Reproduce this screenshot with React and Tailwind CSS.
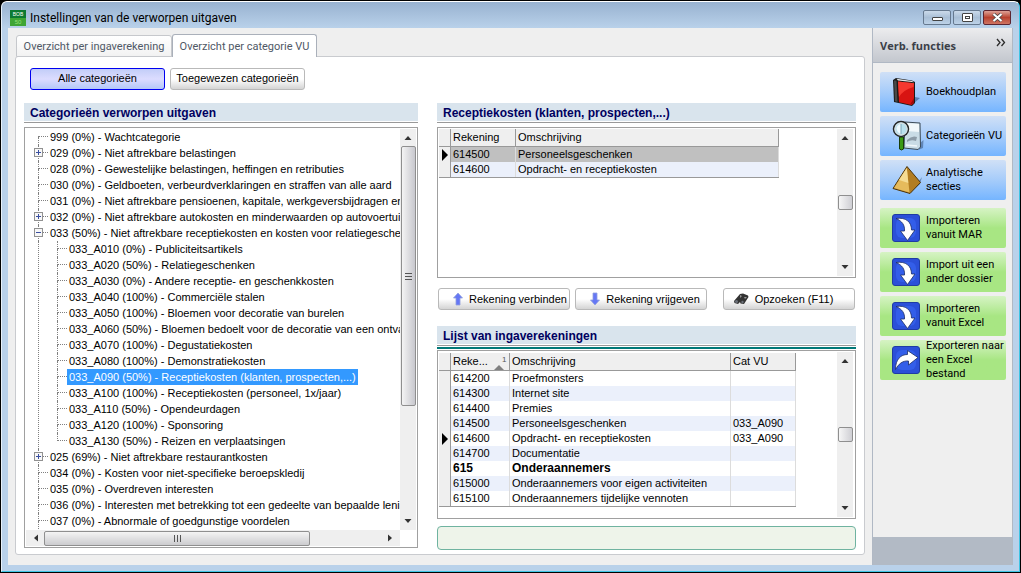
import React from 'react';

const TREE = [
  { label: '999 (0%) - Wachtcategorie' },
  { label: '029 (0%) - Niet aftrekbare belastingen', expander: 'plus' },
  { label: '028 (0%) - Gewestelijke belastingen, heffingen en retributies' },
  { label: '030 (0%) - Geldboeten, verbeurdverklaringen en straffen van alle aard' },
  { label: '031 (0%) - Niet aftrekbare pensioenen, kapitale, werkgeversbijdragen en -p' },
  { label: '032 (0%) - Niet aftrekbare autokosten en minderwaarden op autovoertuige', expander: 'plus' },
  {
    label: '033 (50%) - Niet aftrekbare receptiekosten en kosten voor relatiegeschenk',
    expander: 'minus',
    children: [
      '033_A010 (0%) - Publiciteitsartikels',
      '033_A020 (50%) - Relatiegeschenken',
      '033_A030 (0%) - Andere receptie- en geschenkkosten',
      '033_A040 (100%) - Commerciële stalen',
      '033_A050 (100%) - Bloemen voor decoratie van burelen',
      '033_A060 (50%) - Bloemen bedoelt voor de decoratie van een ontvan',
      '033_A070 (100%) - Degustatiekosten',
      '033_A080 (100%) - Demonstratiekosten',
      '033_A090 (50%) - Receptiekosten (klanten, prospecten,...)',
      '033_A100 (100%) - Receptiekosten (personeel, 1x/jaar)',
      '033_A110 (50%) - Opendeurdagen',
      '033_A120 (100%) - Sponsoring',
      '033_A130 (50%) - Reizen en verplaatsingen',
    ],
  },
  { label: '025 (69%) - Niet aftrekbare restaurantkosten', expander: 'plus' },
  { label: '034 (0%) - Kosten voor niet-specifieke beroepskledij' },
  { label: '035 (0%) - Overdreven interesten' },
  { label: '036 (0%) - Interesten met betrekking tot een gedeelte van bepaalde lening' },
  { label: '037 (0%) - Abnormale of goedgunstige voordelen' },
];

const SELECTED = '033_A090';

const LINKED = [
  { code: '614500', name: 'Personeelsgeschenken', current: true },
  { code: '614600', name: 'Opdracht- en receptiekosten' },
];

const ACCOUNTS = [
  { code: '614200', name: 'Proefmonsters' },
  { code: '614300', name: 'Internet site' },
  { code: '614400', name: 'Premies' },
  { code: '614500', name: 'Personeelsgeschenken', cat: '033_A090' },
  { code: '614600', name: 'Opdracht- en receptiekosten', cat: '033_A090', current: true },
  { code: '614700', name: 'Documentatie' },
  { code: '615', name: 'Onderaannemers', bold: true },
  { code: '615000', name: 'Onderaannemers voor eigen activiteiten' },
  { code: '615100', name: 'Onderaannemers tijdelijke vennoten' },
];

/* ---------- icons ---------- */

const BookIcon = () => (
  <svg viewBox="0 0 28 30" className="h-[30px] w-7">
    <path d="M21 27 L28 21 L23 20 Z" fill="#2d4a74" opacity=".55" />
    <path d="M1 3 L4 1 L20 3.500 L23 5 L23 26 L20 29 L2 25 Z" fill="#1b1b1b" />
    <path d="M4.500 1.800 L20 4 L22 5.200 L6 3.400 Z" fill="#e6e6e6" />
    <path d="M2 3.500 L4.500 3.800 L5.500 25 L3 24.300 Z" fill="#4a4a4a" />
    <path d="M6 4.500 L22 6.200 L22 26 L19.500 28 L7 25.300 Z" fill="#d81412" />
    <path d="M6 4.500 L22 6.200 L21.500 10 Q11 13 7 20 Z" fill="#f5392f" />
    <path d="M18 27.700 L22 26 L22 21 Z" fill="#9d0a0a" />
  </svg>
);

const SearchDocIcon = () => (
  <svg viewBox="0 0 32 32" className="h-8 w-8">
    <path d="M27 24 L31.500 20 L31 28 L26 30 Z" fill="#2d4a74" opacity=".5" />
    <path d="M13 2 L28 3 L28.500 27 L26 29.500 L12 28 Z" fill="#c9dce6" stroke="#3c4c5a" />
    <path d="M14 3 L27 4 L27 12 L14 11 Z" fill="#f1f8fb" />
    <path d="M15 20 Q20 15 25 17 L24 21 Q19 19 15 22 Z" fill="#8d9ca8" />
    <path d="M14 25 L25 26" stroke="#f1f8fb" strokeWidth="1.500" />
    <path d="M7.500 17 h4 v12 q-2 2 -4 0 Z" fill="#3a9a14" stroke="#173d08" />
    <circle cx="9" cy="9" r="7.500" fill="#b9e1ee" stroke="#262626" strokeWidth="1.500" />
    <circle cx="9" cy="9" r="6" fill="none" stroke="#ddd" strokeWidth="1" />
    <path d="M4.500 8 Q6 4 9 4 V14 Q5 13 4.500 8" fill="#effaff" />
    <path d="M9 4 V14" stroke="#7ba6b8" />
  </svg>
);

const PyramidIcon = () => (
  <svg viewBox="0 0 30 30" className="h-[30px] w-[30px]">
    <path d="M18 28 L30 12 L28 19 Z" fill="#2d4a74" opacity=".5" />
    <path d="M15 1.500 L1 23.500 L18 28.500 L28.500 17.500 Z" fill="#b27d22" stroke="#4d350b" strokeLinejoin="round" />
    <path d="M14.800 3 L2 23 L17.500 27.500 Z" fill="#e6bb5c" />
    <path d="M14.800 3 L7 15 L16.300 18 Z" fill="#f5dc94" />
  </svg>
);

const ArrowTile = ({ out }) => (
  <svg viewBox="0 0 28 28" className="h-7 w-7">
    <rect x=".5" y=".5" width="27" height="27" rx="2.500" fill="#2b50d8" stroke="#1f3ca4" />
    <rect x="4" y="4" width="20" height="20" rx="6" fill="#3868f5" opacity=".6" />
    {out ? (
      <path d="M3.500 23.500 C3.500 13 9 8.500 15.500 8.500 L15.500 4.500 L26 11.500 L16.500 19 L16.500 15 C10.500 14.500 6.500 18 3.500 23.500 Z" fill="#fff" stroke="#1a2c66" strokeWidth=".8" />
    ) : (
      <path d="M4 4.500 C14 3 19.500 8 19.500 16 L23 16 L15.500 26.500 L8.500 17 L12.500 17 C13 11 10 7 4 4.500 Z" fill="#fff" stroke="#1a2c66" strokeWidth=".8" />
    )}
  </svg>
);

const MoveArrow = ({ down }) => (
  <svg viewBox="0 0 10 14" className="h-3.5 w-2.5 shrink-0">
    <path
      d={down ? 'M3 1 H7 V8 H9.500 L5 13 L.5 8 H3 Z' : 'M3 13 H7 V6 H9.500 L5 1 L.5 6 H3 Z'}
      fill="#6577f5"
      stroke="#8fa0dd"
      strokeWidth=".8"
    />
  </svg>
);

const Binoculars = () => (
  <svg viewBox="0 0 16 12" className="h-3 w-4 shrink-0">
    <path d="M1 8 L7 1 L10 0.500 L15 2.500 L15.500 4 L11 11 L7.500 10.500 L7 9 L5 11 L1.500 10 Z" fill="#333" />
    <path d="M7 2 L9 3 L7 5 Z M11 4 L14 4 L12 6 Z" fill="#999" />
    <circle cx="3.500" cy="8.500" r="1.500" fill="#6a6f78" />
    <circle cx="9.500" cy="9" r="1.200" fill="#6a6f78" />
  </svg>
);

/* ---------- small parts ---------- */

const WindowButton = ({ label, close, children }) => (
  <button
    aria-label={label}
    className={
      close
        ? 'flex h-[15px] w-7 items-center justify-center rounded-xs border border-[#5d2530] bg-linear-to-b from-[#dda197] via-[#b8412f] to-[#cf7462]'
        : 'flex h-[15px] w-7 items-center justify-center rounded-xs border border-[#66798f] bg-linear-to-b from-[#cbdaea] via-[#a9bfd6] to-[#bdd2e8]'
    }
  >
    {children}
  </button>
);

const SectionTitle = ({ children }) => (
  <div className="border-b border-[#999] pb-px">
    <h2 className="h-[18px] bg-[#d9e4ed] px-1.5 pt-[3px] text-[12px] leading-[15px] font-bold whitespace-nowrap text-[#00005f]">
      {children}
    </h2>
  </div>
);

const ToolButton = ({ icon, className, children }) => (
  <button
    className={`flex h-[22px] items-center justify-center gap-1.5 overflow-hidden rounded-[3px] border border-[#b9b9b9] bg-linear-to-b from-white from-50% to-[#d4d4d4] text-[11px] whitespace-nowrap ${className}`}
  >
    {icon}
    {children}
  </button>
);

const ScrollArrow = ({ d }) => (
  <svg viewBox="0 0 16 16" className="size-4 shrink-0">
    <path d={d} fill="#333" />
  </svg>
);

const VScroll = ({ children }) => (
  <div aria-hidden="true" className="flex w-4 shrink-0 flex-col items-center bg-[#efefef] py-px">
    <ScrollArrow d="M8 6 L11.500 10 H4.500 Z" />
    {children}
    <ScrollArrow d="M4.500 6 H11.500 L8 10 Z" />
  </div>
);

const SmallThumb = () => (
  <div className="h-[15px] w-[15px] shrink-0 rounded-xs border border-[#8f8f8f] bg-linear-to-r from-[#f6f6f6] to-[#cfcfd4]" />
);

/* ---------- category tree ---------- */

const Guide = ({ first, last, expander }) => (
  <span className="relative flex h-4 w-2.5 shrink-0 flex-col">
    <span className={`h-2 border-b border-dotted border-[#808080] ${first ? '' : 'border-l'}`} />
    <span className={`h-2 border-dotted border-[#808080] ${last ? '' : 'border-l'}`} />
    {expander && (
      <svg viewBox="0 0 9 9" className="absolute top-[3px] -left-1 size-[9px]">
        <rect x=".5" y=".5" width="8" height="8" fill="#f7f7f7" stroke="#919191" />
        <path d={expander === 'plus' ? 'M2 4.500 H7 M4.500 2 V7' : 'M2 4.500 H7'} stroke="#3a4fa0" />
      </svg>
    )}
  </span>
);

const CategoryTree = () => (
  <ul className="min-w-0 flex-1 overflow-hidden pl-3 text-[11px] leading-4 whitespace-nowrap">
    {TREE.map((node, i) => (
      <li key={node.label}>
        <div className="flex">
          <Guide first={i === 0} expander={node.expander} />
          <span className="px-0.5">{node.label}</span>
        </div>
        {node.children && (
          <ul className="border-l border-dotted border-[#808080] pl-[18px]">
            {node.children.map((label, j) => (
              <li key={label} className="flex">
                <Guide last={j === node.children.length - 1} />
                <span className={label.startsWith(SELECTED) ? 'bg-[#3399ff] px-0.5 text-white' : 'px-0.5'}>{label}</span>
              </li>
            ))}
          </ul>
        )}
      </li>
    ))}
  </ul>
);

/* ---------- grids ---------- */

const Marker = ({ show }) => (
  <td className="border-r border-[#999] bg-[#efefef] p-0">
    {show && (
      <svg viewBox="0 0 8 12" className="ml-0.5 block h-3 w-2">
        <path d="M1 0 L7 6 L1 12 Z" fill="#000" />
      </svg>
    )}
  </td>
);

const HEAD = 'h-[18px] overflow-hidden border-r border-b border-[#999] bg-[#efefef] px-0.5 py-0 text-left font-normal';
const CELL = 'h-[15px] overflow-hidden border-r border-[#dcdcdc] px-0.5 py-0';

const LinkedTable = () => (
  <table className="w-[340px] table-fixed border-separate border-spacing-0 border-b border-[#999] text-[11px] leading-[15px] whitespace-nowrap">
    <colgroup>
      <col className="w-[12px]" />
      <col className="w-[65px]" />
      <col />
    </colgroup>
    <thead>
      <tr>
        <th className={HEAD} aria-label="Huidige rij" />
        <th className={HEAD}>Rekening</th>
        <th className={HEAD}>Omschrijving</th>
      </tr>
    </thead>
    <tbody>
      {LINKED.map((row) => (
        <tr key={row.code} className={row.current ? 'bg-[#c0c0c0]' : 'bg-[#ebf0fb]'}>
          <Marker show={row.current} />
          <td className={CELL}>{row.code}</td>
          <td className={CELL}>{row.name}</td>
        </tr>
      ))}
    </tbody>
  </table>
);

const AccountsTable = () => (
  <table className="w-[357px] table-fixed border-separate border-spacing-0 border-b border-[#999] text-[11px] leading-[15px] whitespace-nowrap">
    <colgroup>
      <col className="w-[12px]" />
      <col className="w-[59px]" />
      <col />
      <col className="w-[65px]" />
    </colgroup>
    <thead>
      <tr>
        <th className={HEAD} aria-label="Huidige rij" />
        <th className={HEAD}>
          <span className="flex justify-between">
            Reke...
            <svg viewBox="0 0 14 16" className="h-4 w-3.5">
              <path d="M1 16 L6 11 L11 16 Z" fill="#808080" />
              <text x="9" y="8" fontSize="8" fill="#555">1</text>
            </svg>
          </span>
        </th>
        <th className={HEAD}>Omschrijving</th>
        <th className={HEAD}>Cat VU</th>
      </tr>
    </thead>
    <tbody>
      {ACCOUNTS.map((row) => (
        <tr key={row.code} className={`even:bg-[#ebf0fb] ${row.bold ? 'text-[12px] font-bold' : ''}`}>
          <Marker show={row.current} />
          <td className={CELL}>{row.code}</td>
          <td className={CELL}>{row.name}</td>
          <td className={CELL}>{row.cat}</td>
        </tr>
      ))}
    </tbody>
  </table>
);

/* ---------- sidebar ---------- */

const SideButton = ({ icon, green, children }) => (
  <button
    className={`flex h-10 w-full items-center rounded-xs pl-2 text-left font-[Roboto,'Noto_Sans',sans-serif] text-[11px] leading-[14px] ${
      green
        ? 'bg-linear-to-b from-[#d6f3c4] via-[#a8e683] to-[#a8e683]'
        : 'bg-linear-to-b from-[#d0e0f6] via-[#a6ccfa] to-[#75b5ff]'
    }`}
  >
    <span className="flex w-[38px] shrink-0 items-center pl-1">{icon}</span>
    <span className="whitespace-nowrap">{children}</span>
  </button>
);

const Sidebar = () => (
  <aside className="flex w-[141px] shrink-0 flex-col border-x border-[#b0b8c4] bg-[#efefef]">
    <header className="flex h-[35px] items-center justify-between border-b border-[#b0b8c4] bg-linear-to-b from-[#ececee] to-[#c3c7ce] pr-1.5 pl-[7px]">
      <h2 className="pt-0.5 font-['Open_Sans','Noto_Sans',sans-serif] text-[11px] font-bold text-[#3b3f48]">Verb. functies</h2>
      <button aria-label="Inklappen" className="self-start pt-2.5">
        <svg viewBox="0 0 10 9" className="h-[9px] w-2.5">
          <path d="M1 1 L4 4.500 L1 8 M5.500 1 L8.500 4.500 L5.500 8" fill="none" stroke="#2b2b2b" strokeWidth="1.300" />
        </svg>
      </button>
    </header>
    <nav className="flex flex-1 flex-col gap-1 pt-[9px] pr-1.5 pb-4 pl-[7px]">
      <SideButton icon={<BookIcon />}>Boekhoudplan</SideButton>
      <SideButton icon={<SearchDocIcon />}>Categorieën VU</SideButton>
      <SideButton icon={<PyramidIcon />}>Analytische<br />secties</SideButton>
      <div className="mt-1 flex flex-col gap-1">
        <SideButton green icon={<ArrowTile />}>Importeren<br />vanuit MAR</SideButton>
        <SideButton green icon={<ArrowTile />}>Import uit een<br />ander dossier</SideButton>
        <SideButton green icon={<ArrowTile />}>Importeren<br />vanuit Excel</SideButton>
        <SideButton green icon={<ArrowTile out />}>Exporteren naar<br />een Excel<br />bestand</SideButton>
      </div>
    </nav>
    <div className="h-7 bg-[#b2bac5]" />
  </aside>
);

const App = () => (
  <div className="flex min-h-screen flex-col border border-black bg-black font-['Liberation_Sans',Arial,sans-serif] text-black">
    <div className="flex flex-1 flex-col rounded-t-md border border-t-white border-r-[#3fc4e4] border-b-[#3fc4e4] border-l-[#e8f1fa] bg-[#b9d1ea] bg-linear-to-b from-[#98b2d0] to-[#b9d1ea] to-[26px] px-1.5 pb-1.5">
      <header className="flex h-[26px] items-center justify-between px-0.5">
        <div className="flex items-center gap-1 pt-1.5">
          <svg viewBox="0 0 16 16" className="size-4">
            <rect width="16" height="16" fill="#0c7a33" />
            <rect y="8" width="16" height="8" fill="#3fa535" />
            <text x="8" y="6" fontSize="5" textAnchor="middle" fill="#fff">BOB</text>
            <text x="8" y="14" fontSize="6" textAnchor="middle" fill="#9be07c">50</text>
          </svg>
          <h1 className="font-[Roboto,'Noto_Sans',sans-serif] text-[12px] leading-4 whitespace-nowrap">
            Instellingen van de verworpen uitgaven
          </h1>
        </div>
        <div className="flex gap-0.5 pt-1">
          <WindowButton label="Minimaliseren">
            <span className="mt-1 h-1 w-[11px] rounded-[1px] border border-[#444] bg-white" />
          </WindowButton>
          <WindowButton label="Maximaliseren">
            <span className="flex h-[9px] w-[11px] items-center justify-center rounded-[1px] border border-[#444] bg-white">
              <span className="h-[3px] w-[5px] border border-[#444]" />
            </span>
          </WindowButton>
          <WindowButton label="Sluiten" close>
            <svg viewBox="0 0 11 9" className="h-[9px] w-[11px]">
              <path d="M1.500 1 L9.500 8 M9.500 1 L1.500 8" stroke="#444" strokeWidth="3.600" />
              <path d="M1.500 1 L9.500 8 M9.500 1 L1.500 8" stroke="#fff" strokeWidth="2.200" />
            </svg>
          </WindowButton>
        </div>
      </header>

      <div className="flex flex-1">
        <main className="flex min-w-0 flex-1 flex-col bg-[#efefef] px-[7px] pt-1.5 pb-2.5">
          <div role="tablist" className="z-10 -mb-px flex items-end pl-px font-[Roboto,'Noto_Sans',sans-serif] text-[11px] text-[#4f5866]">
            <button role="tab" aria-selected="false" className="h-[22px] w-[156px] rounded-t-[3px] border border-[#c6c8cc] bg-linear-to-b from-white to-[#f2f2f2] pt-0.5 whitespace-nowrap">
              Overzicht per ingaverekening
            </button>
            <button role="tab" aria-selected="true" className="h-[23px] w-[145px] rounded-t-[3px] border border-b-0 border-[#aab0ba] bg-white pt-0.5 whitespace-nowrap">
              Overzicht per categorie VU
            </button>
          </div>

          <div className="flex flex-1 flex-col rounded-[3px] border border-[#c9cbcf] bg-white px-2 pt-[11px] pb-1">
            <div className="flex gap-[5px] pl-1.5">
              <button className="h-[22px] w-[135px] rounded-[3px] border border-[#0000f0] bg-linear-to-b from-[#c2cdf8] via-[#dcdcff] to-[#b4c8f8] pb-0.5 text-[11px]">
                Alle categorieën
              </button>
              <ToolButton className="w-[135px] pb-0.5">Toegewezen categorieën</ToolButton>
            </div>

            <div className="mt-[13px] grid flex-1 grid-cols-[394fr_419fr] gap-[19px]">
              <section className="flex min-w-0 flex-col pb-0.5">
                <SectionTitle>Categorieën verworpen uitgaven</SectionTitle>
                <div className="mt-1 flex flex-1 flex-col border border-[#a0a0a0] p-px">
                  <div className="flex flex-1">
                    <CategoryTree />
                    <VScroll>
                      <div className="flex h-[260px] w-[15px] flex-col items-center justify-center gap-0.5 rounded-xs border border-[#8f8f8f] bg-linear-to-r from-[#f4f4f4] to-[#c8c8ce]">
                        <span className="h-px w-[7px] bg-[#555]" />
                        <span className="h-px w-[7px] bg-[#555]" />
                        <span className="h-px w-[7px] bg-[#555]" />
                      </div>
                      <span className="flex-1" />
                    </VScroll>
                  </div>
                  <div aria-hidden="true" className="mr-4 flex h-4 items-center bg-[#efefef] px-0.5">
                    <ScrollArrow d="M6 8 L10 4.500 V11.500 Z" />
                    <div className="flex h-[15px] w-[72%] items-center justify-center gap-0.5 rounded-xs border border-[#8f8f8f] bg-linear-to-b from-[#f4f4f4] to-[#cccccf]">
                      <span className="h-[7px] w-px bg-[#555]" />
                      <span className="h-[7px] w-px bg-[#555]" />
                      <span className="h-[7px] w-px bg-[#555]" />
                    </div>
                    <span className="flex-1" />
                    <ScrollArrow d="M10 8 L6 4.500 V11.500 Z" />
                  </div>
                </div>
              </section>

              <section className="flex min-w-0 flex-col">
                <SectionTitle>Receptiekosten (klanten, prospecten,...)</SectionTitle>
                <div className="mt-1 flex h-[151px] justify-between border border-[#a0a0a0] py-px pr-0.5 pl-px">
                  <div>
                    <LinkedTable />
                  </div>
                  <VScroll>
                    <span className="flex-1" />
                    <SmallThumb />
                    <span className="flex-1" />
                  </VScroll>
                </div>

                <div className="flex gap-[5px] px-px py-2.5">
                  <ToolButton className="w-[132px] pl-3" icon={<MoveArrow />}>Rekening verbinden</ToolButton>
                  <ToolButton className="w-[132px] pl-2" icon={<MoveArrow down />}>Rekening vrijgeven</ToolButton>
                  <ToolButton className="ml-auto w-[132px] pr-3" icon={<Binoculars />}>Opzoeken (F11)</ToolButton>
                </div>

                <div className="mt-1.5">
                  <SectionTitle>Lijst van ingaverekeningen</SectionTitle>
                </div>
                <div className="mt-px h-0.5 bg-[#007878]" />
                <div className="mt-px flex flex-1 justify-between border border-[#a0a0a0] py-px pr-0.5 pl-px">
                  <div className="pt-px pb-2">
                    <AccountsTable />
                  </div>
                  <VScroll>
                    <span className="flex-1" />
                    <SmallThumb />
                    <span className="flex-1" />
                  </VScroll>
                </div>

                <input readOnly aria-label="Melding" className="mt-[7px] h-6 w-full rounded-[4px] border border-[#6fb3a0] bg-[#eef4ea] px-2 text-[12px]" />
              </section>
            </div>
          </div>
        </main>
        <Sidebar />
      </div>
    </div>
  </div>
);

export default App;
